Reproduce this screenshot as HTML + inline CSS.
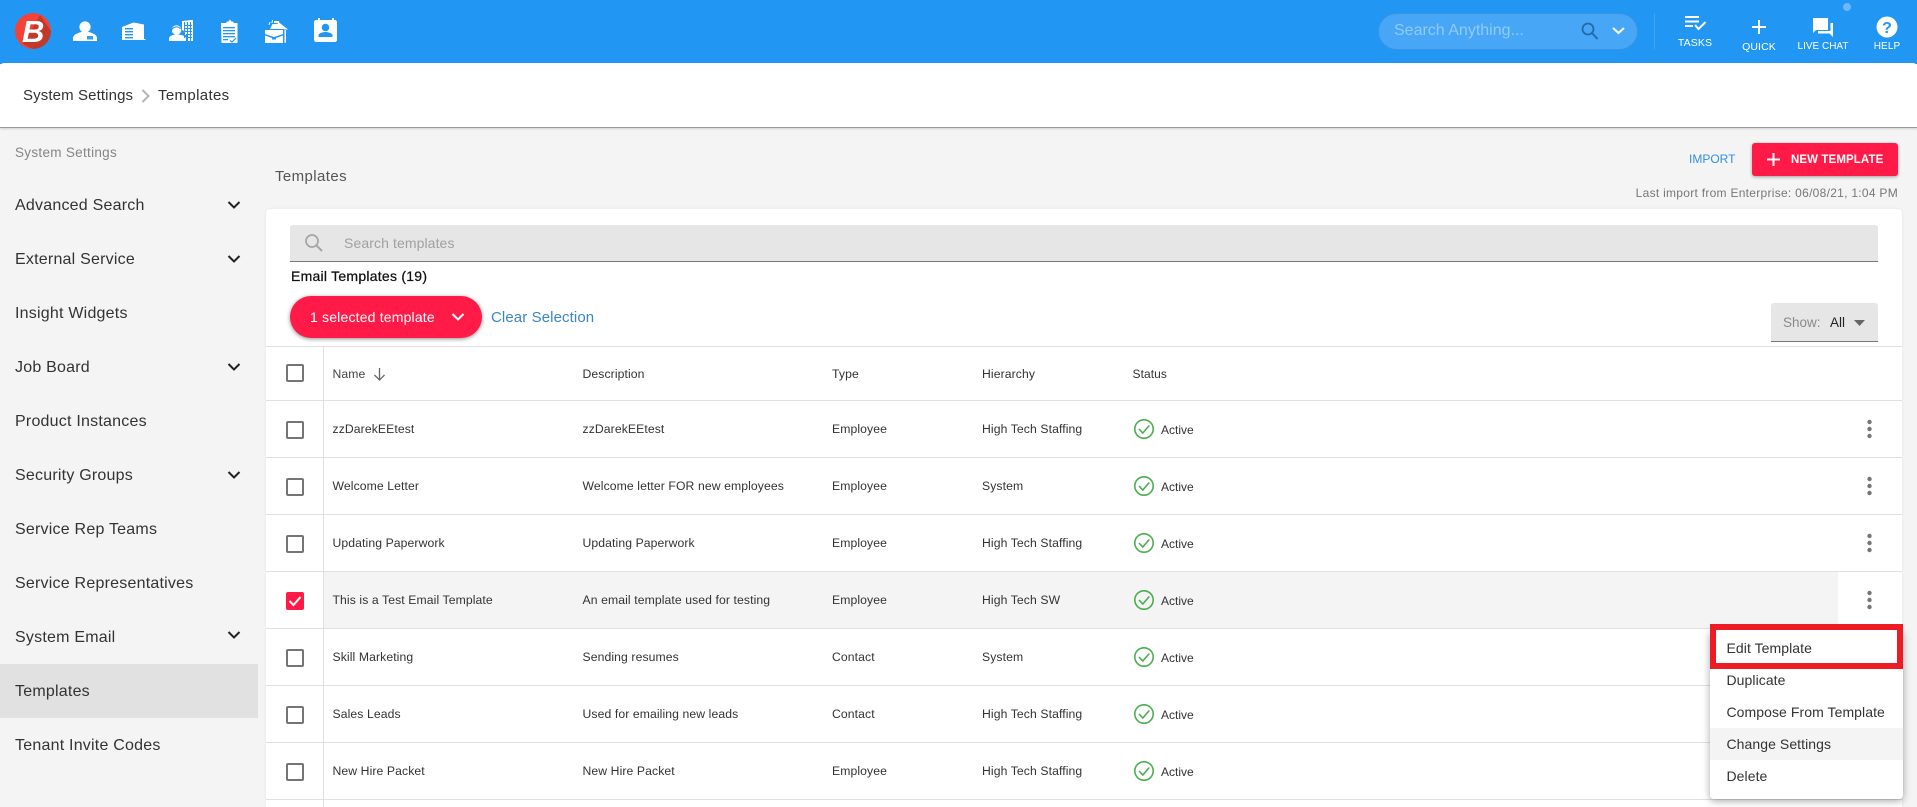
<!DOCTYPE html>
<html lang="en"><head><meta charset="utf-8"><title>Templates</title>
<style>
html,body{margin:0;padding:0;width:1917px;height:807px;overflow:hidden;background:#f4f4f4;font-family:"Liberation Sans",Arial,sans-serif;color:#333}
*{box-sizing:border-box}
#wrap{position:absolute;left:0;top:0;width:1917px;height:807px;overflow:hidden}
.a,.t,.s,.r,.n,.d,.ty,.h,.st,.cb,.m{position:absolute}
.t{white-space:nowrap}
#top{position:absolute;left:0;top:0;width:1917px;height:64px;background:#2196f3}
#sub{position:absolute;left:0;top:63px;width:1917px;height:65px;background:#fff;border-bottom:1px solid #999;border-radius:4px 4px 0 0;box-shadow:0 1px 2px rgba(0,0,0,.15)}
.s{left:15px;font-size:16px;line-height:24px;letter-spacing:.22px;color:#333;white-space:nowrap}
#card{position:absolute;left:266px;top:209px;width:1636px;height:598px;background:#fff;border-radius:4px 4px 0 0;box-shadow:0 0 2px rgba(0,0,0,.08)}
.r{left:266px;width:1636px;height:57px;border-top:1px solid #e0e0e0;font-size:12.2px;letter-spacing:.1px;color:#333;line-height:56px}
.n,.d,.ty,.h,.st{top:0;white-space:nowrap}
.n{left:66.500px}.d{left:316.500px}.ty{left:566px}.h{left:716px}.st{left:895px;letter-spacing:0;top:1px;font-size:12px}
.cb{left:20px;top:20px;width:18px;height:18px;border:2px solid #757575;border-radius:2px;background:#fff}
.m{left:1710px;width:193px;height:32px;line-height:32px;padding-left:16.500px;font-size:14px;letter-spacing:.07px;color:#333;white-space:nowrap}
.lbl{position:absolute;color:#fff;font-size:10px;line-height:12px;width:70px;text-align:center;letter-spacing:.1px}
</style></head><body><div id="wrap">
<div id="top"></div>
<svg class="a" style="left:0;top:0" width="1917" height="64" viewBox="0 0 1917 64">
<!-- logo -->
<circle cx="33" cy="31" r="18" fill="#f44336"/>
<path d="M23 44 L40 15 L51 31 A18 18 0 0 1 33 49 Z" fill="#c0392b"/>
<text x="22" y="42" font-family="Liberation Sans" font-weight="700" font-style="italic" font-size="31" fill="#fff">B</text>
<!-- person -->
<g fill="#fff">
<circle cx="85" cy="27" r="5.600"/>
<path d="M73 41v-3c0-4 8-6.500 12-6.500s12 2.500 12 6.500v3z"/>
<!-- building -->
<path d="M122 40V27l11.500-4.500 10.500 2V39h1.500v1z"/>
<!-- person + building -->
<path d="M182 21l10-1v21h-5v-6h-3v-4l-2-1z"/>
<rect x="192" y="20" width="1" height="21"/>
<circle cx="176.500" cy="30" r="4.800"/>
<path d="M169 41v-2.500c0-3 5-4 8-4s9 1 9 4V41z"/>
<!-- clipboard -->
<path d="M221 23h5l1-1.500h1.500l1.500-2 1.500 2h1.500l1 1.500h3.500v20h-16z"/>
<!-- briefcase -->
<path d="M265 30h18v4l-9 3-9-3z"/>
<path d="M265 35.500l7 2.500v1.500h4V38l7-2.500V43h-18z"/>
<path d="M284.500 30h1.500v12.500l-1.500.5z"/>
<path d="M270 29l2.500-5 5 0 1-2 9.500 7.500h-4v-.5z"/>
<path d="M268.500 25l1-3h1l-1 3zM271.500 23l.5-3h1l-.5 3zM274 21h5v2h-5z"/>
<!-- calendar -->
<path d="M316 20h2v-2h2v2h12v-2h2v2h1c1 0 2 1 2 2v18c0 1-1 2-2 2h-19c-1 0-2-1-2-2V22c0-1 1-2 2-2z"/>
</g>
<g fill="#2196f3">
<rect x="87" y="36" width="6" height="3.500" opacity=".9"/>
<rect x="125" y="28" width="8" height="1.400"/><rect x="125" y="31" width="8" height="1.400"/><rect x="125" y="34" width="8" height="1.400"/><rect x="125" y="37" width="8" height="1.400"/>
<rect x="184" y="22" width="1" height="16"/><rect x="187" y="22" width="1" height="19"/><rect x="190" y="22" width="1" height="19"/>
<rect x="184" y="25" width="8" height="1"/><rect x="184" y="28" width="8" height="1"/><rect x="184" y="31" width="8" height="1"/><rect x="186" y="34" width="6" height="1"/><rect x="186" y="37" width="6" height="1"/>
<rect x="223" y="27" width="12" height="1.300"/><rect x="223" y="30" width="12" height="1.300"/><rect x="223" y="33" width="12" height="1.300"/><rect x="223" y="36" width="12" height="1.300"/><rect x="223" y="39" width="5" height="1.300"/>
<circle cx="325.500" cy="27.500" r="3.800"/><path d="M318.500 37v-1.500c0-2.500 4.500-3.500 7-3.500s7 1 7 3.500V37z"/>
</g>
<path d="M230 40.500l2 1.500 4-4" fill="none" stroke="#2196f3" stroke-width="1.200"/>
<path d="M171.500 31a5 5 0 0 1 9-2" fill="none" stroke="#2196f3" stroke-width="1"/>
<!-- search pill -->
<rect x="1378.500" y="13.500" width="259" height="36" rx="18" fill="#47a6f6" stroke="#3a94e0"/>
<circle cx="1588" cy="29" r="5.500" fill="none" stroke="#1f6cad" stroke-width="1.800"/>
<path d="M1592 33l5.500 6" stroke="#1f6cad" stroke-width="2" fill="none"/>
<path d="M1613 28l5.500 5 5.500-5" stroke="#fff" stroke-width="2" fill="none"/>
<rect x="1654" y="13" width="1" height="36" fill="#3fa3f5"/>
<!-- tasks -->
<g fill="#fff"><rect x="1685" y="16" width="14" height="2"/><rect x="1685" y="20.500" width="14" height="2"/><rect x="1685" y="25" width="8" height="2"/></g>
<path d="M1695 25l3.500 4 7-7" fill="none" stroke="#fff" stroke-width="2"/>
<!-- quick -->
<path d="M1759 20v14M1752 27h14" stroke="#fff" stroke-width="2" fill="none"/>
<!-- chat -->
<path d="M1813 18h15v12h-12l-3 3z" fill="#fff"/>
<path d="M1830.500 23h2.500v14l-3.500-3.500h-11.500V31h12.500z" fill="#fff"/>
<!-- help -->
<circle cx="1887" cy="27" r="10.500" fill="#fff"/>
<text x="1887" y="33" text-anchor="middle" font-family="Liberation Sans" font-weight="700" font-size="16" fill="#2196f3">?</text>
<circle cx="1847" cy="7" r="4" fill="#6db8f8"/>
</svg>
<div class="t" style="left:1394px;top:21px;font-size:16px;line-height:20px;color:#90caf9">Search Anything...</div>
<div class="lbl" style="left:1660px;top:37px;font-size:10.500px">TASKS</div>
<div class="lbl" style="left:1724px;top:41px;font-size:10.500px">QUICK</div>
<div class="lbl" style="left:1788px;top:41px;letter-spacing:0">LIVE CHAT</div>
<div class="lbl" style="left:1852px;top:41px">HELP</div>

<div id="sub"></div>
<div class="t" style="left:23px;top:86px;font-size:15px;line-height:20px;letter-spacing:.12px;color:#333">System Settings</div>
<svg class="a" style="left:140px;top:88px" width="12" height="16"><path d="M2.500 2l6 6-6 6" fill="none" stroke="#b5b5b5" stroke-width="2"/></svg>
<div class="t" style="left:158px;top:86px;font-size:15px;line-height:20px;letter-spacing:.35px;color:#333">Templates</div>

<!-- sidebar -->
<div class="t" style="left:15px;top:144px;font-size:13.500px;line-height:18px;letter-spacing:.3px;color:#858585">System Settings</div>
<div class="a" style="left:0;top:664px;width:258px;height:54px;background:#e1e1e1"></div>
<div class="s" style="top:194px">Advanced Search</div>
<div class="s" style="top:248px">External Service</div>
<div class="s" style="top:302px">Insight Widgets</div>
<div class="s" style="top:356px">Job Board</div>
<div class="s" style="top:410px">Product Instances</div>
<div class="s" style="top:464px">Security Groups</div>
<div class="s" style="top:518px">Service Rep Teams</div>
<div class="s" style="top:572px">Service Representatives</div>
<div class="s" style="top:626px">System Email</div>
<div class="s" style="top:680px">Templates</div>
<div class="s" style="top:734px">Tenant Invite Codes</div>
<svg class="a" style="left:226px;top:190px" width="16" height="400" fill="none" stroke="#222" stroke-width="2">
<path d="M2.500 12l5.500 5.500 5.500-5.500"/><path d="M2.500 66l5.500 5.500 5.500-5.500"/><path d="M2.500 174l5.500 5.500 5.500-5.500"/><path d="M2.500 282l5.500 5.500 5.500-5.500"/>
</svg>
<svg class="a" style="left:226px;top:620px" width="16" height="30" fill="none" stroke="#222" stroke-width="2"><path d="M2.500 12l5.500 5.500 5.500-5.500"/></svg>

<!-- heading -->
<div class="t" style="left:275px;top:167px;font-size:15px;line-height:20px;letter-spacing:.4px;color:#555">Templates</div>
<div class="t" style="left:1689px;top:152px;font-size:12px;line-height:14px;color:#2f8fe6">IMPORT</div>
<div class="a" style="left:1752px;top:143px;width:146px;height:33px;background:#ff1a47;border-radius:3px;box-shadow:0 1px 3px rgba(0,0,0,.35)"></div>
<svg class="a" style="left:1766px;top:152px" width="15" height="15"><path d="M7.500 1v13M1 7.500h13" stroke="#fff" stroke-width="2"/></svg>
<div class="t" style="left:1791px;top:153px;font-size:11.500px;line-height:14px;font-weight:700;letter-spacing:.1px;color:#fff">NEW TEMPLATE</div>
<div class="t" style="right:19px;top:186px;font-size:12px;line-height:14px;letter-spacing:.28px;color:#777">Last import from Enterprise: 06/08/21, 1:04 PM</div>

<div id="card"></div>
<div class="a" style="left:290px;top:225px;width:1588px;height:37px;background:#e6e6e6;border-bottom:1px solid #777;border-radius:3px 3px 0 0"></div>
<svg class="a" style="left:304px;top:233px" width="20" height="20" fill="none" stroke="#a5a5a5"><circle cx="8" cy="8" r="6" stroke-width="1.700"/><path d="M12.500 12.500l5.500 5.500" stroke-width="2"/></svg>
<div class="t" style="left:344px;top:234px;font-size:14px;line-height:18px;letter-spacing:.1px;color:#a0a0a0">Search templates</div>
<div class="t" style="left:291px;top:267px;font-size:14px;line-height:18px;letter-spacing:.25px;color:#111;-webkit-text-stroke:.25px #111">Email Templates (19)</div>
<div class="a" style="left:290px;top:296px;width:192px;height:42px;background:#ff1a47;border-radius:21px;box-shadow:0 1px 4px rgba(0,0,0,.45)"></div>
<div class="t" style="left:310px;top:308px;font-size:14px;line-height:18px;color:#fff;letter-spacing:.18px">1 selected template</div>
<svg class="a" style="left:451px;top:312px" width="14" height="10"><path d="M1.500 2l5.500 5.500 5.500-5.500" fill="none" stroke="#fff" stroke-width="2"/></svg>
<div class="t" style="left:491px;top:308px;font-size:15px;line-height:20px;letter-spacing:.1px;color:#3a85c6">Clear Selection</div>

<div class="a" style="left:1771px;top:303px;width:107px;height:39px;background:#e6e6e6;border-bottom:1px solid #777;border-radius:3px 3px 0 0"></div>
<div class="t" style="left:1783px;top:314px;font-size:13.500px;line-height:18px;color:#8a8a8a">Show:</div>
<div class="t" style="left:1830px;top:314px;font-size:13.500px;line-height:18px;color:#222">All</div>
<svg class="a" style="left:1854px;top:320px" width="11" height="6"><path d="M0 0h11l-5.500 6z" fill="#666"/></svg>

<!-- header row -->
<div class="r" style="top:346px;height:54px;line-height:54px">
<span class="n" style="color:#444">Name</span>
<svg class="a" style="left:107px;top:20px" width="14" height="15" fill="none" stroke="#666" stroke-width="1.300"><path d="M6.500 1v12M1.500 8l5 5 5-5"/></svg>
<span class="d">Description</span><span class="ty">Type</span><span class="h">Hierarchy</span><span class="st" style="top:0;left:866.500px;letter-spacing:.07px">Status</span>
<i class="cb" style="top:17px"></i>
</div>

<div class="r" style="top:400px"><i class="cb"></i><span class="n">zzDarekEEtest</span><span class="d">zzDarekEEtest</span><span class="ty">Employee</span><span class="h">High Tech Staffing</span><span class="st">Active</span></div>
<div class="r" style="top:457px"><i class="cb"></i><span class="n">Welcome Letter</span><span class="d">Welcome letter FOR new employees</span><span class="ty">Employee</span><span class="h">System</span><span class="st">Active</span></div>
<div class="r" style="top:514px"><i class="cb"></i><span class="n">Updating Paperwork</span><span class="d">Updating Paperwork</span><span class="ty">Employee</span><span class="h">High Tech Staffing</span><span class="st">Active</span></div>
<div class="r" style="top:571px"><div class="a" style="left:58px;top:0;width:1514px;height:56px;background:#f4f4f4"></div><i class="cb" style="background:#ff1a47;border-color:#ff1a47"></i><svg class="a" style="left:20px;top:20px" width="18" height="18"><path d="M3.500 9l4 4 7-8" fill="none" stroke="#fff" stroke-width="2"/></svg><span class="n">This is a Test Email Template</span><span class="d">An email template used for testing</span><span class="ty">Employee</span><span class="h">High Tech SW</span><span class="st">Active</span></div>
<div class="r" style="top:628px"><i class="cb"></i><span class="n">Skill Marketing</span><span class="d">Sending resumes</span><span class="ty">Contact</span><span class="h">System</span><span class="st">Active</span></div>
<div class="r" style="top:685px"><i class="cb"></i><span class="n">Sales Leads</span><span class="d">Used for emailing new leads</span><span class="ty">Contact</span><span class="h">High Tech Staffing</span><span class="st">Active</span></div>
<div class="r" style="top:742px"><i class="cb"></i><span class="n">New Hire Packet</span><span class="d">New Hire Packet</span><span class="ty">Employee</span><span class="h">High Tech Staffing</span><span class="st">Active</span></div>
<div class="a" style="left:266px;top:799px;width:1636px;height:1px;background:#e0e0e0"></div>
<div class="a" style="left:323px;top:346px;width:1px;height:461px;background:#e0e0e0"></div>

<svg class="a" style="left:1120px;top:400px" width="760" height="407">
<defs><g id="ok"><circle cx="24" cy="29" r="9.200" fill="none" stroke="#4caf50" stroke-width="1.600"/><path d="M19 29l3.800 4 6.500-7.500" fill="none" stroke="#4caf50" stroke-width="1.600"/></g>
<g id="dots" fill="#757575"><circle cx="749.500" cy="22" r="2.200"/><circle cx="749.500" cy="29" r="2.200"/><circle cx="749.500" cy="36" r="2.200"/></g></defs>
<use href="#ok" y="0"/><use href="#ok" y="57"/><use href="#ok" y="114"/><use href="#ok" y="171"/><use href="#ok" y="228"/><use href="#ok" y="285"/><use href="#ok" y="342"/>
<use href="#dots" y="0"/><use href="#dots" y="57"/><use href="#dots" y="114"/><use href="#dots" y="171"/>
</svg>

<!-- context menu -->
<div class="a" style="left:1710px;top:630px;width:193px;height:169px;background:#fff;border-radius:4px;box-shadow:0 2px 8px rgba(0,0,0,.35)"></div>
<div class="a" style="left:1710px;top:728px;width:193px;height:32px;background:#f4f4f4"></div>
<div class="a" style="left:1710px;top:624px;width:193px;height:45px;background:#fff;border:6px solid #ed1c24"></div>
<div class="m" style="top:632px">Edit Template</div>
<div class="m" style="top:664px">Duplicate</div>
<div class="m" style="top:696px">Compose From Template</div>
<div class="m" style="top:728px">Change Settings</div>
<div class="m" style="top:760px">Delete</div>
</div></body></html>
